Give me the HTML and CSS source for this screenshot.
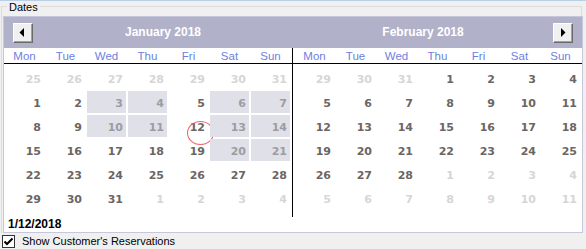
FILE: index.html
```html
<!DOCTYPE html>
<html lang="en">

<head>
    <meta charset="UTF-8">
    <title>Dates</title>
    <link rel="stylesheet" href="styles.css">
</head>

<body>
    <div class="window">
        <div class="group">
            <span class="group-title">Dates</span>
            <div class="calendar">
                <div class="cal-head">
                    <button class="nav">
                        <svg width="18" height="18" viewBox="0 0 18 18"><polygon points="10,4 10,13 5.5,8.5" fill="#000"/></svg>
                    </button>
                    <div class="cal-title">January 2018</div>
                    <div class="cal-title">February 2018</div>
                    <button class="nav">
                        <svg width="18" height="18" viewBox="0 0 18 18"><polygon points="7,4 7,13 11.5,8.5" fill="#000"/></svg>
                    </button>
                </div>
                <div class="cal-body">
                    <!-- 一月 -->
                    <div class="month month-jan">
                        <div class="weekdays">
                            <span>Mon</span><span>Tue</span><span>Wed</span><span>Thu</span><span>Fri</span><span>Sat</span><span>Sun</span>
                        </div>
                        <div class="days">
                            <span class="other">25</span><span class="other">26</span><span class="other">27</span><span class="other">28</span><span class="other">29</span><span class="other">30</span><span class="other">31</span>
                            <span>1</span><span>2</span><span class="busy">3</span><span class="busy">4</span><span>5</span><span class="busy">6</span><span class="busy">7</span>
                            <span>8</span><span>9</span><span class="busy">10</span><span class="busy">11</span><span class="today-mark">12</span><span class="busy">13</span><span class="busy">14</span>
                            <span>15</span><span>16</span><span>17</span><span>18</span><span>19</span><span class="busy">20</span><span class="busy">21</span>
                            <span>22</span><span>23</span><span>24</span><span>25</span><span>26</span><span>27</span><span>28</span>
                            <span>29</span><span>30</span><span>31</span><span class="other">1</span><span class="other">2</span><span class="other">3</span><span class="other">4</span>
                        </div>
                    </div>
                    <div class="divider"></div>
                    <!-- 二月 -->
                    <div class="month month-feb">
                        <div class="weekdays">
                            <span>Mon</span><span>Tue</span><span>Wed</span><span>Thu</span><span>Fri</span><span>Sat</span><span>Sun</span>
                        </div>
                        <div class="days">
                            <span class="other">29</span><span class="other">30</span><span class="other">31</span><span>1</span><span>2</span><span>3</span><span>4</span>
                            <span>5</span><span>6</span><span>7</span><span>8</span><span>9</span><span>10</span><span>11</span>
                            <span>12</span><span>13</span><span>14</span><span>15</span><span>16</span><span>17</span><span>18</span>
                            <span>19</span><span>20</span><span>21</span><span>22</span><span>23</span><span>24</span><span>25</span>
                            <span>26</span><span>27</span><span>28</span><span class="other">1</span><span class="other">2</span><span class="other">3</span><span class="other">4</span>
                            <span class="other">5</span><span class="other">6</span><span class="other">7</span><span class="other">8</span><span class="other">9</span><span class="other">10</span><span class="other">11</span>
                        </div>
                    </div>
                </div>
                <div class="today">1/12/2018</div>
            </div>
        </div>
        <label class="check">
            <span class="box">
                <svg width="11" height="11" viewBox="0 0 11 11"><path d="M1.5 5.5 L4 8 L9.5 2.5" fill="none" stroke="#000" stroke-width="2"/></svg>
            </span>
            Show Customer's Reservations
        </label>
    </div>
</body>

</html>
```

FILE: styles.css
```css
:root {
    --headColor: #b1b1c9;
    --dayNameColor: #6e80e2;
    --numColor: #6b6663;
    --otherColor: #d6d6d6;
    --busyBg: #e0e0e8;
    --busyColor: #9c9ca4;
}

* {
    padding: 0;
    margin: 0;
    box-sizing: border-box;
}

body {
    background-color: #f0f0f0;
    font-family: "Liberation Sans", Arial, sans-serif;
    font-size: 11px;
    color: #000;
}

.window {
    width: 586px;
    height: 249px;
    border-top: 1px solid #b9cfe6;
}

/* 分组框 */
.group {
    position: relative;
    width: 581px;
    margin: 5px 0 0 1px;
    border: 1px solid #dcdcdc;
    border-bottom: 0;
}

.group-title {
    position: absolute;
    top: -6px;
    left: 5px;
    padding: 0 2px;
    line-height: 13px;
    background-color: #f0f0f0;
}

/* 日历 */
.calendar {
    width: 580px;
    margin: 9px 0 0 1px;
    border: 1px solid #c6c6dc;
    background-color: #fff;
}

.cal-head {
    display: flex;
    align-items: center;
    height: 31px;
    padding: 0 9px;
    background-color: var(--headColor);
}

.cal-head .nav {
    display: flex;
    align-items: center;
    justify-content: center;
    width: 20px;
    height: 20px;
    border: 1px solid;
    border-color: #fff #6a6a6a #6a6a6a #fff;
    box-shadow: inset -1px -1px 0 #a0a0a0;
    background-color: #f0f0f0;
}

.cal-title {
    flex: 1;
    text-align: center;
    font-size: 12px;
    font-weight: bold;
    line-height: 31px;
    color: #fff;
}

.cal-body {
    display: flex;
}

.divider {
    width: 1px;
    background-color: #000;
}

.month-jan {
    width: 288px;
}

.month-feb {
    width: 289px;
}

.weekdays,
.days {
    display: grid;
    grid-template-columns: repeat(7, 39px);
    column-gap: 2px;
}

.month-jan .weekdays,
.month-jan .days {
    padding-left: 1px;
}

.month-feb .weekdays,
.month-feb .days {
    padding-left: 2px;
}

.weekdays {
    height: 16px;
    padding-top: 2px;
    border-bottom: 1px solid #000;
}

.weekdays span {
    text-align: center;
    font-size: 11.5px;
    line-height: 13px;
    color: var(--dayNameColor);
}

.days {
    grid-auto-rows: 22px;
    row-gap: 2px;
    padding-top: 3px;
    padding-bottom: 8px;
}

.days span {
    position: relative;
    padding: 3px 3px 0 0;
    text-align: right;
    font-family: "DejaVu Sans", sans-serif;
    font-size: 11px;
    font-weight: bold;
    line-height: 19px;
    color: var(--numColor);
}

.days .other {
    color: var(--otherColor);
}

.days .busy {
    background-color: var(--busyBg);
    color: var(--busyColor);
}

/* 今天的红圈 */
.days .today-mark::after {
    content: "";
    position: absolute;
    top: 6px;
    left: 18px;
    width: 25px;
    height: 22px;
    border: 1.5px solid #f0606e;
    border-radius: 50%;
}

.today {
    height: 15px;
    padding-left: 4px;
    font-size: 12px;
    font-weight: bold;
    line-height: 15px;
}

/* 复选框 */
.check {
    display: flex;
    align-items: center;
    gap: 7px;
    height: 16px;
    padding-left: 2px;
}

.check .box {
    display: flex;
    align-items: center;
    justify-content: center;
    width: 13px;
    height: 13px;
    border: 1px solid #333;
    background-color: #fff;
}
```
